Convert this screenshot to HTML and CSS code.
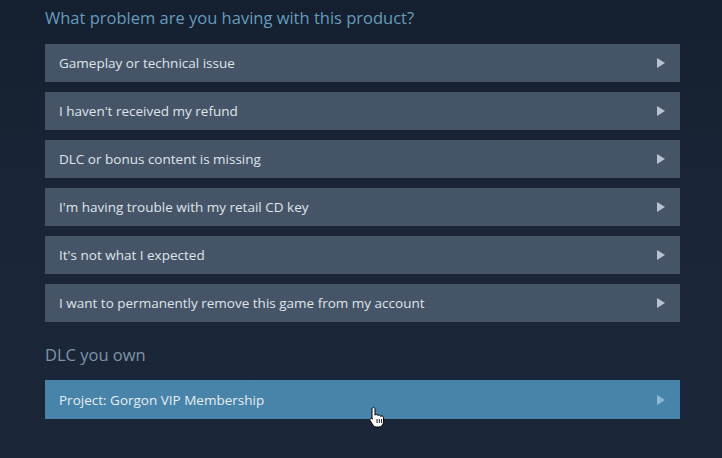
FILE: index.html
```html
<!DOCTYPE html>
<html lang="en">
<head>
  <meta charset="UTF-8" />
  <title>Help</title>
  <link rel="stylesheet" href="styles.css">
</head>
<body>
  <div class="wizard">
    <h2 class="section-title">What problem are you having with this product?</h2>

    <div class="choices">
      <a class="choice" href="#">Gameplay or technical issue <span class="arrow"></span></a>
      <a class="choice" href="#">I haven't received my refund <span class="arrow"></span></a>
      <a class="choice" href="#">DLC or bonus content is missing <span class="arrow"></span></a>
      <a class="choice" href="#">I'm having trouble with my retail CD key <span class="arrow"></span></a>
      <a class="choice" href="#">It's not what I expected <span class="arrow"></span></a>
      <a class="choice" href="#">I want to permanently remove this game from my account <span class="arrow"></span></a>
    </div>

    <h2 class="section-title dlc">DLC you own</h2>

    <div class="choices">
      <a class="choice hover" href="#">Project: Gorgon VIP Membership <span class="arrow"></span>
        <!-- pointer cursor over the hovered row -->
        <svg class="cursor" width="16" height="22" viewBox="0 0 16 22">
          <path d="M4.5 1.5c.8 0 1.5.7 1.5 1.5v6.2c.3-.5.8-.8 1.4-.8.8 0 1.4.6 1.5 1.3.3-.4.8-.7 1.3-.7.9 0 1.5.7 1.5 1.5.3-.3.7-.5 1.2-.5.9 0 1.6.7 1.6 1.6v4.1c0 3-2 5.3-5 5.3H7.6c-1.6 0-2.8-.8-3.7-2L1.2 14.7c-.5-.8-.3-1.8.5-2.2.7-.4 1.5-.2 2 .4L3 13V3c0-.8.7-1.5 1.5-1.5z" fill="#fff" stroke="#000" stroke-width="1"/>
          <path d="M8 13v4M10.3 13v4M12.6 13v4" stroke="#000" stroke-width="0.9"/>
        </svg>
      </a>
    </div>
  </div>
</body>
</html>
```

FILE: styles.css
```css
body {
  margin: 0;
  min-height: 458px;
  background: linear-gradient(180deg, #141f2f 0%, #1a2637 45%, #1b2738 100%);
  font-family: "Open Sans", Arial, sans-serif;
}
.wizard {
  padding: 6px 42px 0 45px;
  width: 635px;
}
.section-title {
  margin: 0 0 14px;
  font-size: 16.5px;
  font-weight: normal;
  line-height: 24px;
  color: #679cbd;
}
.section-title.dlc {
  margin-top: 21px;
  margin-bottom: 13px;
  color: #7e95a9;
}
.choices {
  display: flex;
  flex-direction: column;
  gap: 10px;
}
.choice {
  position: relative;
  display: flex;
  align-items: center;
  justify-content: space-between;
  height: 38px;
  padding: 0 14px;
  background: #465468;
  color: #dfe5ea;
  font-size: 13.5px;
  text-decoration: none;
}
.choice.hover {
  height: 39px;
  background: #4883a9;
  color: #e6eef3;
}
.arrow {
  width: 0;
  height: 0;
  margin-right: 1px;
  border-top: 5px solid transparent;
  border-bottom: 5px solid transparent;
  border-left: 8px solid #b6c3d3;
}
.choice.hover .arrow {
  border-left-color: #8fb6d2;
}
.cursor {
  position: absolute;
  left: 324px;
  top: 26px;
}
```
